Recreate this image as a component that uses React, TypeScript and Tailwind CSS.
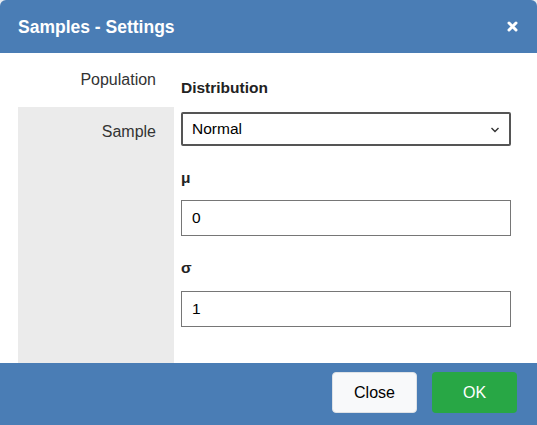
import { useState } from 'react';

const font = { fontFamily: '"Liberation Sans", Arial, sans-serif' };

export default function App() {
  const [dist, setDist] = useState('Normal');
  const [mu, setMu] = useState('0');
  const [sigma, setSigma] = useState('1');

  return (
    <div className="w-[537px] h-[425px] bg-[#e8ecf1] overflow-hidden" style={font}>
      <div className="h-full flex flex-col rounded-t-[6px] overflow-hidden">
        {/* header */}
        <div className="h-[53px] shrink-0 bg-[#4a7db5] flex items-center justify-between pl-[18px] pr-[19px]">
          <span className="text-white font-bold text-[17.5px] leading-none pt-[2px]">Samples - Settings</span>
          <svg width="11" height="11" viewBox="0 0 11 11">
            <path d="M2 2 L9 9 M9 2 L2 9" stroke="#fff" strokeWidth="3" strokeLinecap="round" />
          </svg>
        </div>

        {/* body */}
        <div className="flex-1 bg-white flex">
          <div className="w-[156px] ml-[18px] flex flex-col text-[16px] leading-[18px] text-[#333]">
            <div className="h-[54px] pt-[18px] pr-[18px] text-right">Population</div>
            <div className="flex-1 bg-[#ebebeb] pt-[16px] pr-[18px] text-right">Sample</div>
          </div>

          <div className="flex-1 ml-[7px] mr-[26px] flex flex-col pt-[26px] text-[15.5px] leading-[18px]">
            <label className="font-bold text-[#222]">Distribution</label>
            <div className="relative mt-[15px]">
              <select
                value={dist}
                onChange={(e) => setDist(e.target.value)}
                className="w-full h-[34px] appearance-none border-2 border-[#555] rounded-[2px] bg-white pl-[9px] pr-8 text-[15.5px] text-black outline-none"
                style={font}
              >
                <option>Normal</option>
                <option>Uniform</option>
                <option>Exponential</option>
              </select>
              <svg width="10" height="6" viewBox="0 0 10 6" className="absolute right-[11px] top-[15px] pointer-events-none">
                <path d="M1.5 1 L5 4.5 L8.5 1" stroke="#333" strokeWidth="1.4" fill="none" />
              </svg>
            </div>

            <label className="font-bold text-[#222] mt-[23px]">μ</label>
            <input
              value={mu}
              onChange={(e) => setMu(e.target.value)}
              className="mt-[13px] w-full h-[36px] border border-[#767676] bg-white px-[10px] text-[15.5px] text-black outline-none"
              style={font}
            />

            <label className="font-bold text-[#222] mt-[23px]">σ</label>
            <input
              value={sigma}
              onChange={(e) => setSigma(e.target.value)}
              className="mt-[14px] w-full h-[36px] border border-[#767676] bg-white px-[10px] text-[15.5px] text-black outline-none"
              style={font}
            />
          </div>
        </div>

        {/* footer */}
        <div className="h-[62px] shrink-0 bg-[#4a7db5] flex items-start justify-end gap-[15px] pt-[9px] pr-[20px]">
          <button className="w-[85px] h-[41px] rounded-[4px] bg-[#f8f9fa] border border-[#dee2e6] text-[16px] text-black">
            Close
          </button>
          <button className="w-[85px] h-[41px] rounded-[4px] bg-[#28a745] text-[16px] text-white">
            OK
          </button>
        </div>
      </div>
    </div>
  );
}
